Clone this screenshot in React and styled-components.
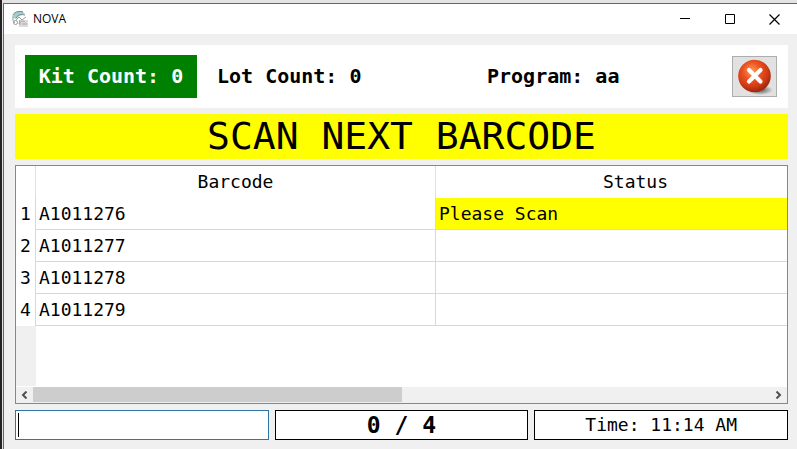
import { useState } from "react"
import styled, { createGlobalStyle } from "styled-components"

const barcodes = [
    { code: 'A1011276', status: 'Please Scan' },
    { code: 'A1011277', status: '' },
    { code: 'A1011278', status: '' },
    { code: 'A1011279', status: '' },
]

const AppIcon = () => (
    <svg width='16' height='16' viewBox='0 0 16 16' fill='none' aria-hidden='true'>
        <path d='M7 9h9v7H7z' fill='#dcdcdc' />
        <path d='M0 6C1 2 5 0 10 0l3 3-5 1-4 4z' fill='#a4cdd0' />
        <path d='M1 4c2-4 7-4 10-3M4 7c2-3 5-4 9-3' stroke='#6f8587' />
        <path d='M1 6l0 4 2 2M4 9l3-3 3 3 4-3M8 9l-1 4' stroke='#9a9fa0' />
        <circle cx='3.5' cy='11.5' r='2' stroke='#9a9d9f' />
        <path d='M8 14c-1-3 3-5 5-3M10 13h5' stroke='#a2a5a6' />
    </svg>
)

const CloseBall = () => (
    <svg width='36' height='36' viewBox='0 0 36 36' aria-hidden='true'>
        <defs>
            <radialGradient id='ball' cx='42%' cy='35%' r='62%'>
                <stop offset='0' stopColor='#ff9d55' />
                <stop offset='0.45' stopColor='#ea5222' />
                <stop offset='0.8' stopColor='#cf3813' />
                <stop offset='1' stopColor='#a02a12' />
            </radialGradient>
            <radialGradient id='shade'>
                <stop offset='0' stopColor='#444' stopOpacity='0.9' />
                <stop offset='1' stopColor='#444' stopOpacity='0' />
            </radialGradient>
        </defs>
        <ellipse cx='23' cy='31' rx='13' ry='5' fill='url(#shade)' />
        <circle cx='17.5' cy='17' r='16.3' fill='url(#ball)' />
        <path d='M12 11l11.5 11.5M23.5 11L12 22.5' stroke='#fff' strokeWidth='4.2' strokeLinecap='round' />
    </svg>
)

const App = () => {
    const [scan, setScan] = useState('')

    return (
        <>
            <GlobalStyle />
            <Window>
                <TitleBar>
                    <AppIcon />
                    <Title>NOVA</Title>
                    <WindowButton aria-label='Minimize'>
                        <svg width='10' height='10'><path d='M0 4.5h10' stroke='#000' /></svg>
                    </WindowButton>
                    <WindowButton aria-label='Maximize'>
                        <svg width='10' height='10'><path d='M.5 .5h9v9h-9z' stroke='#000' fill='none' /></svg>
                    </WindowButton>
                    <WindowButton aria-label='Close'>
                        <svg width='11' height='11'><path d='M.5 .5l10 10M10.5 .5l-10 10' stroke='#000' strokeWidth='1.2' /></svg>
                    </WindowButton>
                </TitleBar>
                <Body>
                    <Panel>
                        <KitCount>Kit Count: 0</KitCount>
                        <Info>Lot Count: 0</Info>
                        <Info>Program: aa</Info>
                        <ExitButton aria-label='Exit'><CloseBall /></ExitButton>
                    </Panel>
                    <Banner>SCAN NEXT BARCODE</Banner>
                    <TableBox>
                        <Viewport>
                            <Table>
                                <thead>
                                    <tr>
                                        <HeadCell $width='20px' />
                                        <HeadCell scope='col' $width='400px'>Barcode</HeadCell>
                                        <HeadCell scope='col' $width='400px'>Status</HeadCell>
                                    </tr>
                                </thead>
                                <tbody>
                                    {barcodes.map((row, i) => (
                                        <tr key={row.code}>
                                            <RowNumber scope='row'>{i + 1}</RowNumber>
                                            <Cell>{row.code}</Cell>
                                            <Cell $active={row.status !== ''}>{row.status}</Cell>
                                        </tr>
                                    ))}
                                </tbody>
                            </Table>
                            <EmptyArea />
                        </Viewport>
                        <ScrollBar>
                            <ScrollButton aria-label='Scroll left'>
                                <svg width='7' height='8'><path d='M5.5 .5L2 4l3.5 3.5' stroke='#505050' strokeWidth='2' fill='none' /></svg>
                            </ScrollButton>
                            <Track><Thumb /></Track>
                            <ScrollButton aria-label='Scroll right'>
                                <svg width='7' height='8'><path d='M1.5 .5L5 4 1.5 7.5' stroke='#505050' strokeWidth='2' fill='none' /></svg>
                            </ScrollButton>
                        </ScrollBar>
                    </TableBox>
                    <Footer>
                        <ScanField>
                            <ScanInput
                                type='text'
                                aria-label='Barcode'
                                value={scan}
                                onChange={e => setScan(e.target.value)}
                            />
                            {scan === '' && <Caret />}
                        </ScanField>
                        <Progress>0 / 4</Progress>
                        <FooterBox>Time: 11:14 AM</FooterBox>
                    </Footer>
                </Body>
            </Window>
        </>
    )
}

export default App

const GlobalStyle = createGlobalStyle`
    * {
        box-sizing: border-box;
    }
    body {
        margin: 0;
        background: #e3e3e3;
        color: #000;
        font-family: "DejaVu Sans Mono", "Liberation Mono", monospace;
        font-size: 18px;
    }
    button, input {
        font: inherit;
        padding: 0;
    }
    svg {
        display: block;
    }
`
const Window = styled.div`
    display: flex;
    flex-direction: column;
    min-height: 100vh;
    padding: 3px 0 0 1px;
    border-left: 2px solid #242224;
`
const TitleBar = styled.header`
    display: flex;
    align-items: center;
    height: 31px;
    padding-left: 8px;
    background: #fff;
    border-top: 1px solid #666;
    border-left: 1px solid #666;
`
const Title = styled.div`
    flex: 1;
    padding-left: 5px;
    font-family: "Open Sans", "Noto Sans", sans-serif;
    font-size: 12px;
    line-height: 14px;
`
const WindowButton = styled.button`
    display: flex;
    align-items: center;
    justify-content: center;
    width: 45px;
    height: 28px;
    border: 0;
    background: none;
`
const Body = styled.main`
    display: flex;
    flex: 1;
    flex-direction: column;
    gap: 6px;
    padding: 11px 9px 9px 11px;
    background: #f0f0f0;
    border-left: 1px solid #666;
`
const Panel = styled.section`
    display: grid;
    grid-template-columns: 172px 250fr 225fr auto;
    gap: 20px;
    align-items: center;
    padding: 10px 11px 10px 10px;
    background: #fff;
`
const Info = styled.div`
    font-size: 20px;
    font-weight: bold;
    line-height: 43px;
    white-space: nowrap;
`
const KitCount = styled(Info)`
    background: #008000;
    color: #fff;
    text-align: center;
`
const ExitButton = styled.button`
    display: flex;
    align-items: center;
    justify-content: center;
    width: 45px;
    height: 41px;
    border: 1px solid #adadad;
    background: #e1e1e1;
`
const Banner = styled.div`
    background: #ff0;
    font-size: 38px;
    line-height: 45px;
    text-align: center;
`
const TableBox = styled.section`
    display: flex;
    flex: 1;
    flex-direction: column;
    min-width: 0;
    border: 1px solid #828790;
    background: #fff;
`
const Viewport = styled.div`
    display: flex;
    flex: 1;
    flex-direction: column;
    overflow: hidden;
`
const Table = styled.table`
    width: 820px;
    table-layout: fixed;
    border-collapse: separate;
    border-spacing: 0;
    line-height: 30px;
`
const HeadCell = styled.th`
    width: ${p => p.$width};
    height: 32px;
    padding: 0;
    border-right: 1px solid #e0e0e0;
    font-weight: normal;
`
const RowNumber = styled.th`
    height: 32px;
    padding: 0;
    border-right: 1px solid #d8d8d8;
    font-weight: normal;
`
const Cell = styled.td`
    height: 32px;
    padding: 0 3px;
    border-right: 1px solid #d8d8d8;
    border-bottom: 1px solid #d8d8d8;
    background: ${p => p.$active ? '#ff0' : '#fff'};
`
const EmptyArea = styled.div`
    flex: 1;
    border-left: 20px solid #f0f0f0;
`
const ScrollBar = styled.div`
    display: flex;
    height: 17px;
    border-top: 1px solid #fff;
    background: #f0f0f0;
`
const ScrollButton = styled.button`
    display: flex;
    align-items: center;
    justify-content: center;
    width: 17px;
    border: 0;
    background: none;
`
const Track = styled.div`
    flex: 1;
`
const Thumb = styled.div`
    width: 50%;
    height: 15px;
    background: #cdcdcd;
`
const Footer = styled.footer`
    display: grid;
    grid-template-columns: repeat(3, 1fr);
    gap: 6px;
`
const FooterBox = styled.div`
    height: 30px;
    border: 1px solid #000;
    background: #fff;
    line-height: 28px;
    text-align: center;
`
const Progress = styled(FooterBox)`
    font-size: 23px;
    font-weight: bold;
`
const ScanField = styled.div`
    position: relative;
`
const ScanInput = styled.input`
    display: block;
    width: 100%;
    height: 30px;
    padding: 0 3px;
    border: 1px solid #2f76a8;
    outline: 0;
    background: #fff;
`
const Caret = styled.span`
    position: absolute;
    top: 3px;
    left: 3px;
    width: 1px;
    height: 24px;
    background: #000;
    pointer-events: none;
`
